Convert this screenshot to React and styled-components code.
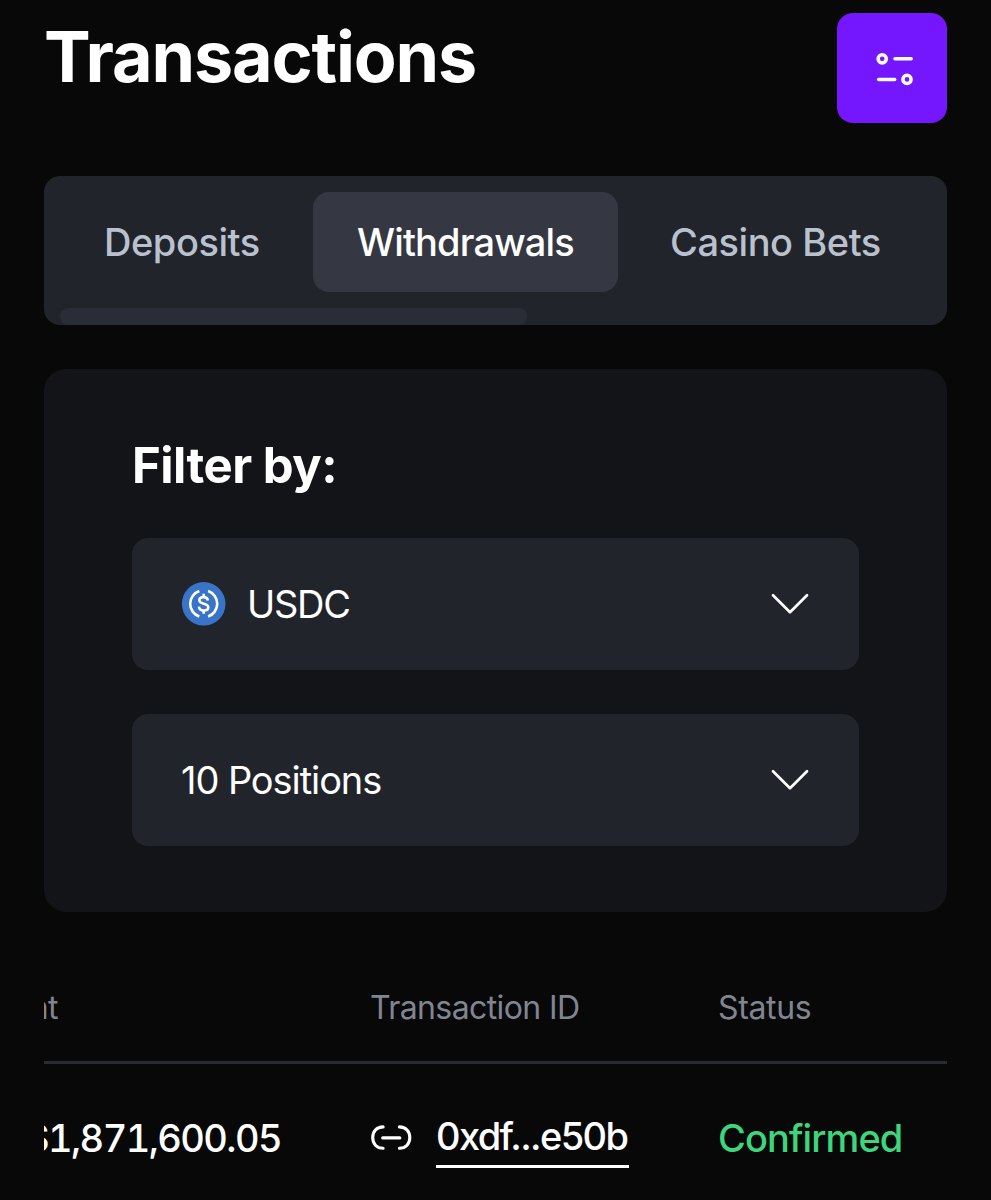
import React from 'react';
import styled, { createGlobalStyle } from 'styled-components';

const GlobalStyle = createGlobalStyle`
	* {
		box-sizing: border-box;
	}

	body {
		margin: 0;
		background: #080808;
		color: #fff;
		font-family: Inter, 'Liberation Sans', sans-serif;
		overflow: hidden;
	}

	button {
		border: 0;
		font: inherit;
		color: inherit;
	}
`;

const Page = styled.main`
	height: 1200px;
	padding: 13px 44px 0;
	overflow: hidden;
`;

const Header = styled.header`
	height: 163px;
	display: flex;
	justify-content: space-between;
	align-items: flex-start;
`;

const Title = styled.h1`
	margin: 0;
	font-size: 70px;
	line-height: 87px;
	font-weight: 700;
	letter-spacing: -1.15px;
`;

const FilterButton = styled.button`
	width: 110px;
	height: 110px;
	padding: 2px 0 0 5px;
	border-radius: 16px;
	background: #7517fe;
	display: flex;
	align-items: center;
	justify-content: center;
`;

const Tabs = styled.nav`
	height: 149px;
	padding: 16px 16px 0;
	border-radius: 16px;
	background: #21242b;
	overflow: hidden;
	display: flex;
	flex-direction: column;
	justify-content: space-between;
`;

const TabList = styled.div`
	display: flex;
	gap: 8px;
`;

const Tab = styled.button`
	flex: none;
	width: ${(props) => props.$width}px;
	height: 100px;
	padding: 0 0 0 44px;
	border-radius: 16px;
	background: ${(props) => (props.$active ? '#353843' : 'transparent')};
	color: ${(props) => (props.$active ? '#fff' : '#b9c1ce')};
	font-size: 38px;
	font-weight: 500;
	letter-spacing: ${(props) => props.$spacing}px;
	text-align: left;
	white-space: nowrap;
`;

const ScrollThumb = styled.div`
	width: 467px;
	height: 17px;
	border-radius: 8px;
	background: #2a2d38;
`;

const FilterPanel = styled.section`
	height: 543px;
	margin-top: 44px;
	padding: 66px 88px;
	border-radius: 22px;
	background: #131417;
`;

const FilterTitle = styled.h2`
	margin: 0 0 42px;
	font-size: 49px;
	line-height: 61px;
	font-weight: 700;
	letter-spacing: -0.5px;
`;

const Select = styled.button`
	width: 100%;
	height: 132px;
	margin-bottom: 44px;
	padding: 0 50px 0 49px;
	border-radius: 16px;
	background: #21242a;
	display: flex;
	align-items: center;
`;

const SelectLabel = styled.span`
	flex: 1;
	margin-left: ${(props) => props.$indent || 0}px;
	font-size: 38px;
	letter-spacing: ${(props) => props.$spacing}px;
	text-align: left;
`;

const TableScroller = styled.div`
	margin-top: 44px;
	overflow: hidden;
`;

const Row = styled.div`
	width: 1014px;
	margin-left: -111px;
	display: grid;
	grid-template-columns: 437px 348px 229px;
	align-items: center;
	white-space: nowrap;
`;

const HeadRow = styled(Row)`
	height: 108px;
	padding-bottom: 2px;
	border-bottom: 3px solid #262c32;
	color: #808592;
	font-size: 32px;
`;

const BodyRow = styled(Row)`
	height: 148px;
	font-size: 38px;
	font-weight: 500;
`;

const Cell = styled.div`
	display: flex;
	align-items: center;
	justify-content: ${(props) => (props.$end ? 'flex-end' : 'flex-start')};
	padding-right: ${(props) => props.$end || 0}px;
	gap: 24px;
	letter-spacing: ${(props) => props.$spacing}px;
	color: ${(props) => props.$color || 'inherit'};
	font-variant-numeric: ${(props) => (props.$tabular ? 'tabular-nums' : 'normal')};
`;

const TxLink = styled.a`
	height: 60px;
	padding-right: 2px;
	line-height: 56px;
	border-bottom: 3px solid #fff;
`;

const SlidersIcon = () => (
	<svg width="38" height="34" viewBox="0 0 38 34" fill="none" stroke="#fff" strokeWidth="3.5" strokeLinecap="round">
		<circle cx="6.2" cy="6.8" r="4.1" />
		<path d="M19 6.8h16.2" />
		<path d="M2.7 27.4h16" />
		<circle cx="31" cy="27.4" r="4.1" />
	</svg>
);

const ChevronIcon = () => (
	<svg width="38" height="22" viewBox="0 0 38 22" fill="none" stroke="#fff" strokeWidth="2.7" strokeLinecap="round" strokeLinejoin="round">
		<path d="M2 2.3 19 19.2 36 2.3" />
	</svg>
);

const UsdcIcon = () => (
	<svg width="45" height="44" viewBox="-0.7 0.2 45 44" fill="none" stroke="#fff" strokeWidth="2.6">
		<circle cx="22" cy="22" r="21.8" fill="#3a74c8" stroke="none" />
		<path d="M17.6 9.3a13.4 13.4 0 0 0 0 25.4M26.4 9.3a13.4 13.4 0 0 1 0 25.4" />
		<path d="M26.2 18.7c-.3-2.3-1.9-3.4-4.3-3.4-2.6 0-4.3 1.2-4.3 3.2 0 4.7 9 2 9 7 0 2-1.8 3.2-4.6 3.2-2.7 0-4.5-1.2-4.8-3.8" />
		<path d="M22 12v3.6M22 28.4V32" />
	</svg>
);

const LinkIcon = () => (
	<svg width="42" height="28" viewBox="-0.5 0.7 42 28" fill="none" stroke="#fff" strokeWidth="3.1" strokeLinecap="round">
		<path d="M12.6 3.6C6 3.6 2.2 8.3 2.2 14.3S6 25 12.6 25" />
		<path d="M28.9 3.6c6.6 0 10.4 4.7 10.4 10.7S35.5 25 28.9 25" />
		<path d="M12.2 14.6h17.1" />
	</svg>
);

const tabs = [
	{ label: 'Deposits', width: 245, spacing: -0.45 },
	{ label: 'Withdrawals', width: 305, spacing: -0.85, active: true },
	{ label: 'Casino Bets', width: 298, spacing: -0.45 },
];

const App = () => {
	return (
		<>
			<GlobalStyle />
			<Page>
				<Header>
					<Title>Transactions</Title>
					<FilterButton aria-label="Filters">
						<SlidersIcon />
					</FilterButton>
				</Header>
				<Tabs>
					<TabList>
						{tabs.map((tab) => (
							<Tab key={tab.label} $width={tab.width} $spacing={tab.spacing} $active={tab.active}>
								{tab.label}
							</Tab>
						))}
					</TabList>
					<ScrollThumb />
				</Tabs>
				<FilterPanel>
					<FilterTitle>Filter by:</FilterTitle>
					<Select>
						<UsdcIcon />
						<SelectLabel $indent={21} $spacing={-1.3}>USDC</SelectLabel>
						<ChevronIcon />
					</Select>
					<Select>
						<SelectLabel $spacing={-1.08}>10 Positions</SelectLabel>
						<ChevronIcon />
					</Select>
				</FilterPanel>
				<TableScroller>
					<HeadRow>
						<Cell $end={312} $spacing={-0.5}>Amount</Cell>
						<Cell $spacing={-0.6}>Transaction ID</Cell>
						<Cell $spacing={-0.35}>Status</Cell>
					</HeadRow>
					<BodyRow>
						<Cell $end={89} $spacing={-1.6} $tabular>$1,871,600.05</Cell>
						<Cell $spacing={-1.6}>
							<LinkIcon />
							<TxLink>0xdf...e50b</TxLink>
						</Cell>
						<Cell $spacing={-0.9} $color="#3dd67d">Confirmed</Cell>
					</BodyRow>
				</TableScroller>
			</Page>
		</>
	);
};

export default App;
